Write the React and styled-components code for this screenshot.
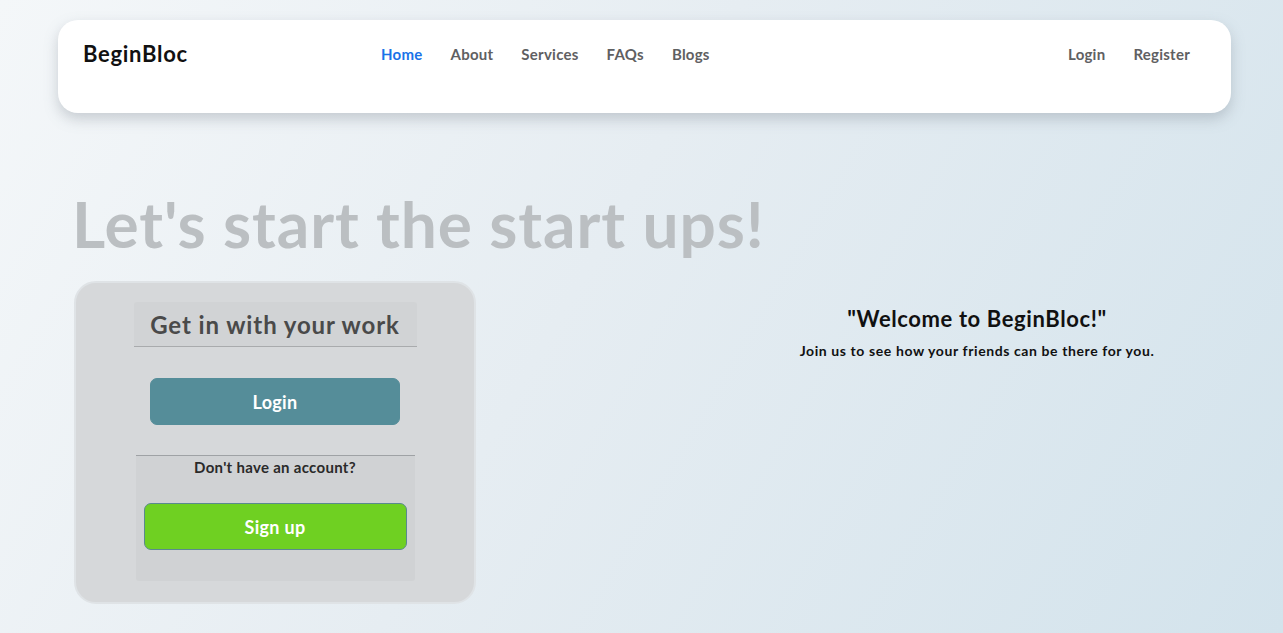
import React from "react";
import styled, { createGlobalStyle } from "styled-components";

const Global = createGlobalStyle`
  html, body { margin: 0; padding: 0; }
  body {
    font-family: Lato, "Open Sans", sans-serif;
    min-height: 100vh;
    background: linear-gradient(120deg, #f4f7f9 0%, #e6edf2 45%, #d3e3ec 100%);
  }
`;

const Page = styled.div`
  min-height: 633px;
  padding: 20px 52px 30px 58px;
  box-sizing: border-box;
`;

const Navbar = styled.nav`
  height: 93px;
  box-sizing: border-box;
  background: #fff;
  border-radius: 20px;
  box-shadow: 0 6px 14px rgba(120, 130, 140, 0.35);
  display: flex;
  align-items: flex-start;
  padding: 20px 41px 0 25px;
`;

const Brand = styled.div`
  font-size: 22px;
  font-weight: 700;
  color: #111;
  width: 298px;
  line-height: 27px;
  letter-spacing: 0.7px;
`;

const NavList = styled.div`
  display: flex;
  gap: 28px;
  flex: ${(p) => (p.$grow ? 1 : "none")};
  padding-top: 5px;
`;

const NavLink = styled.a`
  font-size: 15px;
  font-weight: 700;
  color: ${(p) => (p.$active ? "#1a73e8" : "#5f6062")};
  text-decoration: none;
  line-height: 18px;
  letter-spacing: 0.25px;
`;

const Hero = styled.h1`
  margin: 76px 0 22px 14px;
  font-size: 64px;
  font-weight: 700;
  color: #bbbfc2;
  line-height: 1.1;
  letter-spacing: 0.9px;
`;

const Row = styled.div`
  display: flex;
  padding-left: 16px;
`;

const Card = styled.div`
  width: 402px;
  height: 323px;
  box-sizing: border-box;
  background: #d6d8da;
  border: 2px solid #dfe3e6;
  border-radius: 22px;
  display: flex;
  flex-direction: column;
  align-items: center;
  padding-top: 19px;
`;

const CardHeader = styled.div`
  width: 283px;
  height: 45px;
  box-sizing: border-box;
  background: #d1d3d5;
  border-bottom: 1px solid #a9abad;
  display: flex;
  align-items: center;
  justify-content: center;
  font-size: 24px;
  font-weight: 700;
  color: #4a4a4a;
  letter-spacing: 0.9px;
  border-radius: 3px 3px 0 0;
`;

const Button = styled.button`
  width: ${(p) => p.$w}px;
  height: 47px;
  border-radius: 7px;
  border: 1px solid ${(p) => p.$border};
  background: ${(p) => p.$bg};
  color: #fff;
  font-family: inherit;
  font-size: 18px;
  font-weight: 700;
  letter-spacing: 0.3px;
  cursor: pointer;
`;

const LoginWrap = styled.div`
  margin-top: 31px;
`;

const Lower = styled.div`
  margin-top: 30px;
  width: 279px;
  height: 126px;
  box-sizing: border-box;
  background: #d0d2d4;
  border-top: 1px solid #9fa2a5;
  display: flex;
  flex-direction: column;
  align-items: center;
  border-radius: 0 0 3px 3px;
`;

const Question = styled.div`
  font-size: 15px;
  font-weight: 700;
  color: #2a2a2a;
  margin-top: 2px;
  line-height: 18px;
  letter-spacing: 0.3px;
`;

const SignWrap = styled.div`
  margin-top: 27px;
`;

const Welcome = styled.div`
  margin-left: 296px;
  width: 410px;
  padding-top: 23px;
  text-align: center;
`;

const WTitle = styled.div`
  font-size: 22px;
  font-weight: 700;
  color: #111;
  line-height: 30px;
  letter-spacing: 0.6px;
`;

const WSub = styled.div`
  font-size: 14px;
  font-weight: 700;
  color: #111;
  margin-top: 8px;
  letter-spacing: 0.6px;
`;

export default function App() {
  return (
    <Page>
      <Global />
      <Navbar>
        <Brand>BeginBloc</Brand>
        <NavList $grow>
          <NavLink $active href="#">Home</NavLink>
          <NavLink href="#">About</NavLink>
          <NavLink href="#">Services</NavLink>
          <NavLink href="#">FAQs</NavLink>
          <NavLink href="#">Blogs</NavLink>
        </NavList>
        <NavList>
          <NavLink href="#">Login</NavLink>
          <NavLink href="#">Register</NavLink>
        </NavList>
      </Navbar>
      <Hero>Let's start the start ups!</Hero>
      <Row>
        <Card>
          <CardHeader>Get in with your work</CardHeader>
          <LoginWrap>
            <Button $w={250} $bg="#558d99" $border="#558d99">Login</Button>
          </LoginWrap>
          <Lower>
            <Question>Don't have an account?</Question>
            <SignWrap>
              <Button $w={263} $bg="#6fd022" $border="#5a8a8e">Sign up</Button>
            </SignWrap>
          </Lower>
        </Card>
        <Welcome>
          <WTitle>"Welcome to BeginBloc!"</WTitle>
          <WSub>Join us to see how your friends can be there for you.</WSub>
        </Welcome>
      </Row>
    </Page>
  );
}
